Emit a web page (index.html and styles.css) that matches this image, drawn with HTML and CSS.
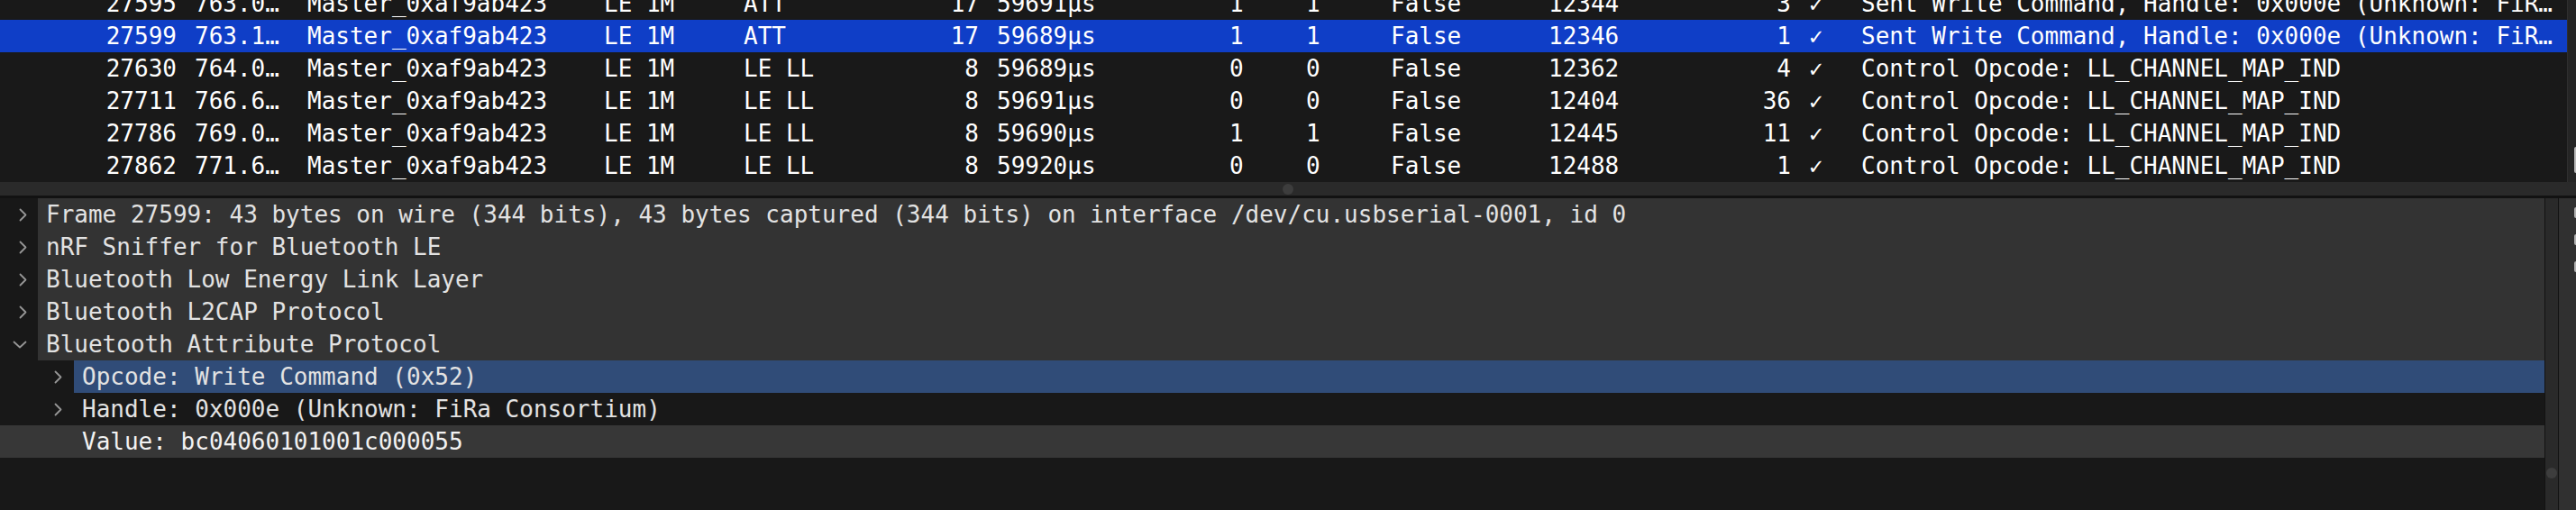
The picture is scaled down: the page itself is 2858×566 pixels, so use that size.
FILE: index.html
```html
<!DOCTYPE html>
<html>
<head>
<meta charset="utf-8">
<title>Packets</title>
<link rel="stylesheet" href="styles.css">
</head>
<body>
<div class="app">
  <div class="packets">
    <div class="plist">
      <div class="rows">
        <div class="prow">
          <span class="c r">27595</span><span class="c">763.0…</span><span class="c">Master_0xaf9ab423</span><span class="c">LE 1M</span><span class="c">ATT</span><span class="c r">17</span><span class="c">59691µs</span><span class="c">1</span><span class="c">1</span><span class="c">False</span><span class="c">12344</span><span class="c r">3</span><span class="c">✓</span><span class="c">Sent Write Command, Handle: 0x000e (Unknown: FiR…</span>
        </div>
        <div class="prow sel">
          <span class="c r">27599</span><span class="c">763.1…</span><span class="c">Master_0xaf9ab423</span><span class="c">LE 1M</span><span class="c">ATT</span><span class="c r">17</span><span class="c">59689µs</span><span class="c">1</span><span class="c">1</span><span class="c">False</span><span class="c">12346</span><span class="c r">1</span><span class="c">✓</span><span class="c">Sent Write Command, Handle: 0x000e (Unknown: FiR…</span>
        </div>
        <div class="prow">
          <span class="c r">27630</span><span class="c">764.0…</span><span class="c">Master_0xaf9ab423</span><span class="c">LE 1M</span><span class="c">LE LL</span><span class="c r">8</span><span class="c">59689µs</span><span class="c">0</span><span class="c">0</span><span class="c">False</span><span class="c">12362</span><span class="c r">4</span><span class="c">✓</span><span class="c">Control Opcode: LL_CHANNEL_MAP_IND</span>
        </div>
        <div class="prow">
          <span class="c r">27711</span><span class="c">766.6…</span><span class="c">Master_0xaf9ab423</span><span class="c">LE 1M</span><span class="c">LE LL</span><span class="c r">8</span><span class="c">59691µs</span><span class="c">0</span><span class="c">0</span><span class="c">False</span><span class="c">12404</span><span class="c r">36</span><span class="c">✓</span><span class="c">Control Opcode: LL_CHANNEL_MAP_IND</span>
        </div>
        <div class="prow">
          <span class="c r">27786</span><span class="c">769.0…</span><span class="c">Master_0xaf9ab423</span><span class="c">LE 1M</span><span class="c">LE LL</span><span class="c r">8</span><span class="c">59690µs</span><span class="c">1</span><span class="c">1</span><span class="c">False</span><span class="c">12445</span><span class="c r">11</span><span class="c">✓</span><span class="c">Control Opcode: LL_CHANNEL_MAP_IND</span>
        </div>
        <div class="prow">
          <span class="c r">27862</span><span class="c">771.6…</span><span class="c">Master_0xaf9ab423</span><span class="c">LE 1M</span><span class="c">LE LL</span><span class="c r">8</span><span class="c">59920µs</span><span class="c">0</span><span class="c">0</span><span class="c">False</span><span class="c">12488</span><span class="c r">1</span><span class="c">✓</span><span class="c">Control Opcode: LL_CHANNEL_MAP_IND</span>
        </div>
      </div>
    </div>
    <div class="pscroll"><div class="thumb"></div></div>
  </div>

  <div class="hsplit"><span class="dot"></span></div>

  <div class="lower">
    <div class="tree">
      <div class="trow">
        <span class="branch"><svg class="chev" width="9" height="15" viewBox="0 0 9 15"><polyline points="1.5,1.5 7.5,7.5 1.5,13.5"/></svg></span>
        <span class="label">Frame 27599: 43 bytes on wire (344 bits), 43 bytes captured (344 bits) on interface /dev/cu.usbserial-0001, id 0</span>
      </div>
      <div class="trow">
        <span class="branch"><svg class="chev" width="9" height="15" viewBox="0 0 9 15"><polyline points="1.5,1.5 7.5,7.5 1.5,13.5"/></svg></span>
        <span class="label">nRF Sniffer for Bluetooth LE</span>
      </div>
      <div class="trow">
        <span class="branch"><svg class="chev" width="9" height="15" viewBox="0 0 9 15"><polyline points="1.5,1.5 7.5,7.5 1.5,13.5"/></svg></span>
        <span class="label">Bluetooth Low Energy Link Layer</span>
      </div>
      <div class="trow">
        <span class="branch"><svg class="chev" width="9" height="15" viewBox="0 0 9 15"><polyline points="1.5,1.5 7.5,7.5 1.5,13.5"/></svg></span>
        <span class="label">Bluetooth L2CAP Protocol</span>
      </div>
      <div class="trow">
        <span class="branch open"><svg class="chev" width="16" height="9" viewBox="0 0 16 9"><polyline points="1.5,1.5 8,7.5 14.5,1.5"/></svg></span>
        <span class="label">Bluetooth Attribute Protocol</span>
      </div>
      <div class="trow child sel">
        <span class="branch"><svg class="chev" width="9" height="15" viewBox="0 0 9 15"><polyline points="1.5,1.5 7.5,7.5 1.5,13.5"/></svg></span>
        <span class="label">Opcode: Write Command (0x52)</span>
      </div>
      <div class="trow child plain">
        <span class="branch"><svg class="chev" width="9" height="15" viewBox="0 0 9 15"><polyline points="1.5,1.5 7.5,7.5 1.5,13.5"/></svg></span>
        <span class="label">Handle: 0x000e (Unknown: FiRa Consortium)</span>
      </div>
      <div class="trow child leaf">
        <span class="branch"></span>
        <span class="label">Value: bc04060101001c000055</span>
      </div>
    </div>
    <div class="vsplit"><span class="dot"></span></div>
    <div class="bytes">
      <span class="mark"></span>
      <span class="mark"></span>
      <span class="mark"></span>
    </div>
  </div>
</div>
</body>
</html>
```

FILE: styles.css
```css
html, body {
  margin: 0;
  padding: 0;
  background: #191919;
  overflow: hidden;
}

.app {
  width: 2858px;
  height: 566px;
  display: flex;
  flex-direction: column;
  font-family: "DejaVu Sans Mono", "Liberation Mono", monospace;
  font-size: 26px;
  color: #ffffff;
}

/* ---------- packet list ---------- */
.packets {
  height: 202px;
  display: flex;
  flex-shrink: 0;
}

.plist {
  flex: 1;
  overflow: hidden;
  background: #191919;
}

.rows {
  margin-top: -14px;
}

.prow {
  display: grid;
  grid-template-columns: 206px 125px 329px 155px 165px 116px 258px 85px 94px 175px 92px 197px 58px 1fr;
  height: 36px;
  line-height: 36px;
}

.prow.sel {
  background: #0f3ec7;
}

.c {
  padding: 0 10px 0 10px;
  white-space: nowrap;
  overflow: hidden;
}

.c.r {
  text-align: right;
}

.pscroll {
  width: 10px;
  border-left: 1px solid #2f2f2f;
  background: #252525;
  display: flex;
  flex-direction: column;
  align-items: flex-end;
  padding-top: 163px;
  box-sizing: border-box;
}

.thumb {
  width: 2px;
  height: 29px;
  background: #b8b8b8;
  border-radius: 2px 0 0 2px;
}

/* ---------- splitter ---------- */
.hsplit {
  height: 15px;
  flex-shrink: 0;
  background: #2a2a2a;
  border-bottom: 3px solid #121212;
  display: flex;
  align-items: center;
  justify-content: center;
}

.dot {
  width: 12px;
  height: 12px;
  border-radius: 50%;
  background: #3d3d3d;
}

/* ---------- lower panes ---------- */
.lower {
  flex: 1;
  display: flex;
  min-height: 0;
}

.tree {
  flex: 1;
  background: #181818;
  color: #e2e2e2;
}

.trow {
  height: 36px;
  display: flex;
  align-items: stretch;
}

.branch {
  width: 42px;
  box-sizing: border-box;
  padding-left: 21px;
  display: flex;
  align-items: center;
  flex-shrink: 0;
}

.branch.open {
  padding-left: 14px;
}

.trow.child .branch {
  width: 82px;
  padding-left: 60px;
}

.chev {
  display: block;
}

.chev polyline {
  fill: none;
  stroke: #969696;
  stroke-width: 1.8;
  stroke-linecap: round;
  stroke-linejoin: round;
}

.label {
  flex: 1;
  padding-left: 9px;
  line-height: 36px;
  white-space: nowrap;
  overflow: hidden;
  background: #333333;
}

.trow.sel .label {
  background: #304c78;
}

.trow.plain .label {
  background: transparent;
}

.trow.leaf {
  background: #373737;
  color: #f2f2f2;
}

.trow.leaf .label {
  background: transparent;
}

.vsplit {
  width: 14px;
  flex-shrink: 0;
  background: #2a2a2a;
  border-left: 1px solid #121212;
  border-right: 1px solid #121212;
  display: flex;
  justify-content: center;
  padding-top: 299px;
  box-sizing: content-box;
}

.vsplit .dot {
  width: 12px;
  height: 12px;
}

.bytes {
  width: 19px;
  flex-shrink: 0;
  background: #303030;
  display: flex;
  flex-direction: column;
  align-items: flex-end;
  gap: 18px;
  padding-top: 10px;
}

.mark {
  width: 0;
  height: 12px;
  border-left: 2px solid #b0b0b0;
  border-radius: 3px 0 0 3px;
}
```
